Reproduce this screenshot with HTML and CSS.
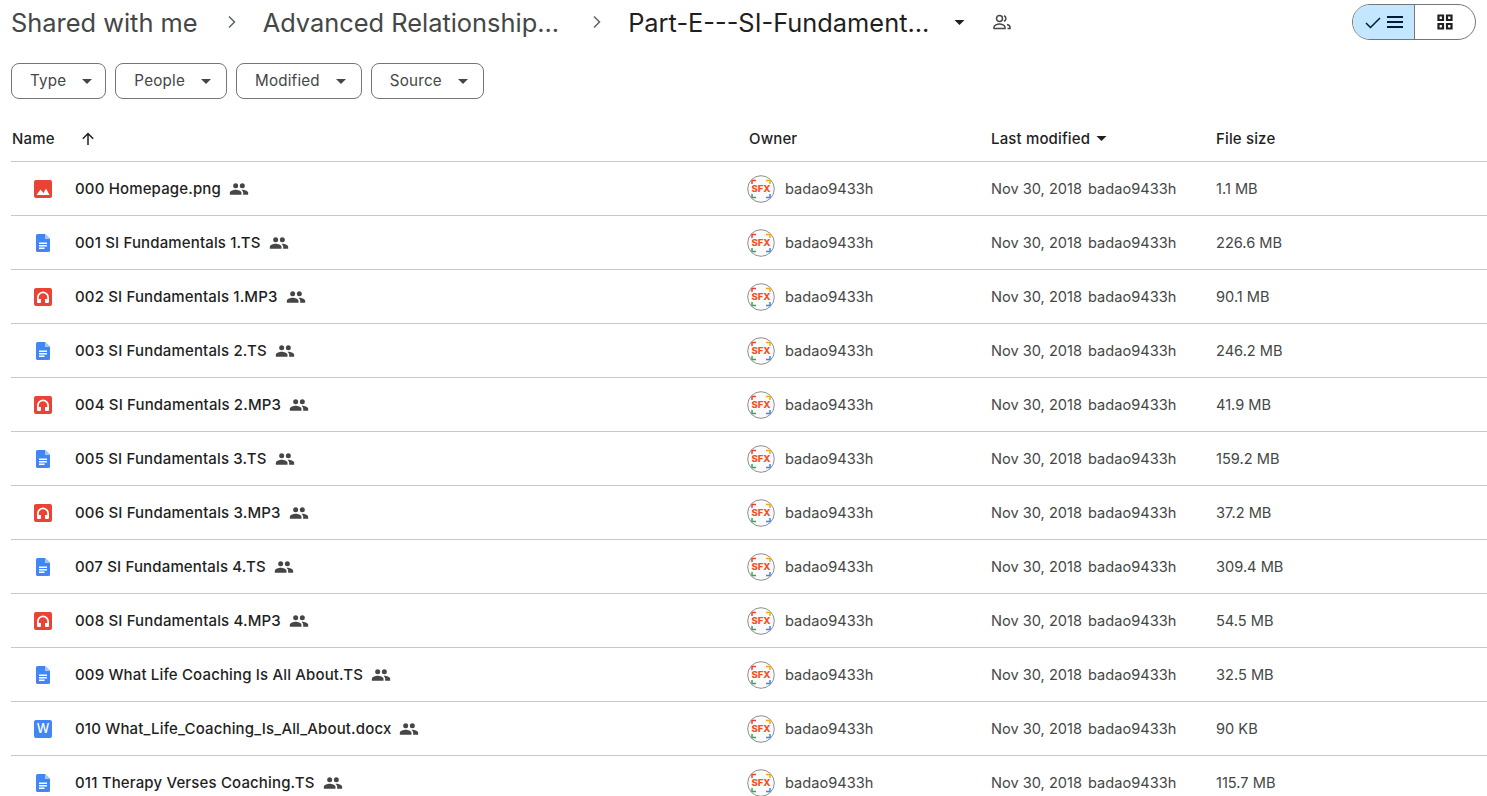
FILE: index.html
```html
<!DOCTYPE html>
<html lang="en">
<head>
<meta charset="utf-8">
<title>Part-E---SI-Fundamentals - Google Drive</title>
<link rel="stylesheet" href="styles.css">
</head>
<body>
<svg class="defs" width="0" height="0" aria-hidden="true">
  <symbol id="people" viewBox="0 0 24 24"><path d="M16 11a3 3 0 1 0 0-6 3 3 0 0 0 0 6zm-8 0a3 3 0 1 0 0-6 3 3 0 0 0 0 6zm0 2c-2.33 0-7 1.17-7 3.5V19h14v-2.5C15 14.17 10.33 13 8 13zm8 0c-.29 0-.62.02-.97.05C16.19 13.89 17 15.02 17 16.5V19h6v-2.500C23 14.17 18.330 13 16 13z"/></symbol>
  <symbol id="image" viewBox="0 0 18 18"><path fill="#ea4335" d="M2 0h14a2 2 0 0 1 2 2v14a2 2 0 0 1-2 2H2a2 2 0 0 1-2-2V2a2 2 0 0 1 2-2z"/><path fill="#fff" d="M2.500 15l4-5.500 3 3.500 2.500-4.500 3.500 6.500z"/></symbol>
  <symbol id="doc" viewBox="0 0 18 18"><path fill="#4285f4" d="M3.500 0H11l5 5v11.500a1.500 1.500 0 0 1-1.500 1.500h-11A1.500 1.500 0 0 1 2 16.500v-15A1.500 1.500 0 0 1 3.500 0z"/><path fill="#a6c5fa" d="M11 0l5 5h-5z"/><path fill="#fff" d="M5 8.500h8V10H5zM5 11h8v1.500H5zM5 13.500h5.500V15H5z"/></symbol>
  <symbol id="audio" viewBox="0 0 18 18"><path fill="#ea4335" d="M2 0h14a2 2 0 0 1 2 2v14a2 2 0 0 1-2 2H2a2 2 0 0 1-2-2V2a2 2 0 0 1 2-2z"/><path fill="#fff" d="M9 3.500a6 6 0 0 0-6 6V14a1 1 0 0 0 1 1h2a1 1 0 0 0 1-1v-3H4.800V9.500a4.200 4.200 0 0 1 8.400 0V11H11v3a1 1 0 0 0 1 1h2a1 1 0 0 0 1-1V9.500a6 6 0 0 0-6-6z"/></symbol>
  <symbol id="word" viewBox="0 0 18 18"><path fill="#4285f4" d="M2 0h14a2 2 0 0 1 2 2v14a2 2 0 0 1-2 2H2a2 2 0 0 1-2-2V2a2 2 0 0 1 2-2z"/></symbol>
  <symbol id="sfx" viewBox="0 0 28 28"><circle cx="14" cy="14" r="13.300" fill="#fbfbfb" stroke="#8f8f8f" stroke-width="1"/><g fill="none" stroke-width="1.500"><path stroke="#ea4335" d="M5 9V5.500h4"/><path stroke="#f9ab00" d="M19 5.500h4V9"/><path stroke="#34a853" d="M5 19v3.500h4"/><path stroke="#4285f4" d="M19 22.500h4V19"/></g></symbol>
  <symbol id="caret" viewBox="0 0 10 5"><path d="M0 0h10L5 5z"/></symbol>
</svg>

<header class="crumbs">
  <span class="crumb">Shared with me</span>
  <svg class="chev" viewBox="0 0 10 14"><path d="M2 1.500 7.500 7 2 12.500" fill="none" stroke="#5f6368" stroke-width="1.500"/></svg>
  <span class="crumb">Advanced Relationship...</span>
  <svg class="chev chev-last" viewBox="0 0 10 14"><path d="M2 1.500 7.500 7 2 12.500" fill="none" stroke="#5f6368" stroke-width="1.500"/></svg>
  <span class="crumb current">Part-E---SI-Fundament...</span>
  <svg class="crumb-caret"><use href="#caret"/></svg>
  <svg class="crumb-people" viewBox="0 0 20 20"><path fill="none" stroke="#444746" stroke-width="1.500" d="M7.500 3.500a3 3 0 1 1 0 6 3 3 0 0 1 0-6zM2 16.500v-1.300c0-1.900 3.300-3.200 5.500-3.200s5.500 1.300 5.500 3.200v1.300zM12 3.700a3 3 0 0 1 0 5.600M15 12.500c1.800.5 3 1.400 3 2.700v1.300h-2.500"/></svg>
  <div class="toggle">
    <div class="toggle-seg on">
      <svg width="17" height="13" viewBox="0 0 17 13"><path d="M1 7l4.500 4.500L15 2" fill="none" stroke="#001d35" stroke-width="1.500"/></svg>
      <svg width="16" height="12" viewBox="0 0 16 12"><path fill="#001d35" d="M0 0h16v2H0zM0 5h16v2H0zM0 10h16v2H0z"/></svg>
    </div>
    <div class="toggle-seg">
      <svg width="16" height="16" viewBox="0 0 16 16"><path fill="none" stroke="#1f1f1f" stroke-width="2.200" d="M1.500 1.500h4.500v4.500H1.500zM10 1.500h4.500v4.500H10zM1.500 10h4.500v4.500H1.500zM10 10h4.500v4.500H10z"/></svg>
    </div>
  </div>
</header>

<nav class="filters">
  <button class="chip">Type<svg class="chip-caret"><use href="#caret"/></svg></button>
  <button class="chip">People<svg class="chip-caret"><use href="#caret"/></svg></button>
  <button class="chip">Modified<svg class="chip-caret"><use href="#caret"/></svg></button>
  <button class="chip">Source<svg class="chip-caret"><use href="#caret"/></svg></button>
</nav>

<section class="table">
  <div class="row head">
    <div class="cell-name"><span class="head-name">Name</span><svg class="arrow" viewBox="0 0 14 14"><path d="M7 13V1.500M1.800 6.700 7 1.500l5.200 5.200" fill="none" stroke="#1f1f1f" stroke-width="1.500"/></svg></div>
    <div>Owner</div>
    <div class="head-mod">Last modified<svg class="head-caret"><use href="#caret"/></svg></div>
    <div>File size</div>
  </div>

  <div class="row"><div class="cell-name"><svg class="ficon"><use href="#image"/></svg><span class="fname">000 Homepage.png</span><svg class="shared"><use href="#people"/></svg></div><div class="owner"><span class="avatar"><svg><use href="#sfx"/></svg><b>SFX</b></span>badao9433h</div><div class="meta"><span>Nov 30, 2018</span><span>badao9433h</span></div><div class="meta">1.1 MB</div></div>
  <div class="row"><div class="cell-name"><svg class="ficon"><use href="#doc"/></svg><span class="fname">001 SI Fundamentals 1.TS</span><svg class="shared"><use href="#people"/></svg></div><div class="owner"><span class="avatar"><svg><use href="#sfx"/></svg><b>SFX</b></span>badao9433h</div><div class="meta"><span>Nov 30, 2018</span><span>badao9433h</span></div><div class="meta">226.6 MB</div></div>
  <div class="row"><div class="cell-name"><svg class="ficon"><use href="#audio"/></svg><span class="fname">002 SI Fundamentals 1.MP3</span><svg class="shared"><use href="#people"/></svg></div><div class="owner"><span class="avatar"><svg><use href="#sfx"/></svg><b>SFX</b></span>badao9433h</div><div class="meta"><span>Nov 30, 2018</span><span>badao9433h</span></div><div class="meta">90.1 MB</div></div>
  <div class="row"><div class="cell-name"><svg class="ficon"><use href="#doc"/></svg><span class="fname">003 SI Fundamentals 2.TS</span><svg class="shared"><use href="#people"/></svg></div><div class="owner"><span class="avatar"><svg><use href="#sfx"/></svg><b>SFX</b></span>badao9433h</div><div class="meta"><span>Nov 30, 2018</span><span>badao9433h</span></div><div class="meta">246.2 MB</div></div>
  <div class="row"><div class="cell-name"><svg class="ficon"><use href="#audio"/></svg><span class="fname">004 SI Fundamentals 2.MP3</span><svg class="shared"><use href="#people"/></svg></div><div class="owner"><span class="avatar"><svg><use href="#sfx"/></svg><b>SFX</b></span>badao9433h</div><div class="meta"><span>Nov 30, 2018</span><span>badao9433h</span></div><div class="meta">41.9 MB</div></div>
  <div class="row"><div class="cell-name"><svg class="ficon"><use href="#doc"/></svg><span class="fname">005 SI Fundamentals 3.TS</span><svg class="shared"><use href="#people"/></svg></div><div class="owner"><span class="avatar"><svg><use href="#sfx"/></svg><b>SFX</b></span>badao9433h</div><div class="meta"><span>Nov 30, 2018</span><span>badao9433h</span></div><div class="meta">159.2 MB</div></div>
  <div class="row"><div class="cell-name"><svg class="ficon"><use href="#audio"/></svg><span class="fname">006 SI Fundamentals 3.MP3</span><svg class="shared"><use href="#people"/></svg></div><div class="owner"><span class="avatar"><svg><use href="#sfx"/></svg><b>SFX</b></span>badao9433h</div><div class="meta"><span>Nov 30, 2018</span><span>badao9433h</span></div><div class="meta">37.2 MB</div></div>
  <div class="row"><div class="cell-name"><svg class="ficon"><use href="#doc"/></svg><span class="fname">007 SI Fundamentals 4.TS</span><svg class="shared"><use href="#people"/></svg></div><div class="owner"><span class="avatar"><svg><use href="#sfx"/></svg><b>SFX</b></span>badao9433h</div><div class="meta"><span>Nov 30, 2018</span><span>badao9433h</span></div><div class="meta">309.4 MB</div></div>
  <div class="row"><div class="cell-name"><svg class="ficon"><use href="#audio"/></svg><span class="fname">008 SI Fundamentals 4.MP3</span><svg class="shared"><use href="#people"/></svg></div><div class="owner"><span class="avatar"><svg><use href="#sfx"/></svg><b>SFX</b></span>badao9433h</div><div class="meta"><span>Nov 30, 2018</span><span>badao9433h</span></div><div class="meta">54.5 MB</div></div>
  <div class="row"><div class="cell-name"><svg class="ficon"><use href="#doc"/></svg><span class="fname">009 What Life Coaching Is All About.TS</span><svg class="shared"><use href="#people"/></svg></div><div class="owner"><span class="avatar"><svg><use href="#sfx"/></svg><b>SFX</b></span>badao9433h</div><div class="meta"><span>Nov 30, 2018</span><span>badao9433h</span></div><div class="meta">32.5 MB</div></div>
  <div class="row"><div class="cell-name"><span class="ficon word"><svg><use href="#word"/></svg><b>W</b></span><span class="fname">010 What_Life_Coaching_Is_All_About.docx</span><svg class="shared"><use href="#people"/></svg></div><div class="owner"><span class="avatar"><svg><use href="#sfx"/></svg><b>SFX</b></span>badao9433h</div><div class="meta"><span>Nov 30, 2018</span><span>badao9433h</span></div><div class="meta">90 KB</div></div>
  <div class="row"><div class="cell-name"><svg class="ficon"><use href="#doc"/></svg><span class="fname">011 Therapy Verses Coaching.TS</span><svg class="shared"><use href="#people"/></svg></div><div class="owner"><span class="avatar"><svg><use href="#sfx"/></svg><b>SFX</b></span>badao9433h</div><div class="meta"><span>Nov 30, 2018</span><span>badao9433h</span></div><div class="meta">115.7 MB</div></div>
</section>
</body>
</html>
```
FILE: styles.css
```css
* { box-sizing: border-box; }
html, body { margin: 0; height: 796px; overflow: hidden; background: #fff; }
body { font-family: Inter, Roboto, sans-serif; color: #1f1f1f; }
.defs { display: block; height: 0; }

.crumbs { display: flex; align-items: center; height: 44px; padding: 0 11px; }
.crumb { font-size: 25.4px; color: #444746; white-space: nowrap; }
.crumb.current { color: #1f1f1f; }
.chev { width: 10px; height: 14px; flex: none; margin: 0 26px 0 29px; }
.chev-last { margin-left: 33px; }
.crumb-caret { width: 11px; height: 5px; flex: none; margin-left: 25px; fill: #1f1f1f; }
.crumb-people { width: 20px; height: 20px; flex: none; margin-left: 27px; }

.toggle { margin-left: auto; display: flex; width: 124px; height: 36px; border: 1px solid #747775; border-radius: 18px; overflow: hidden; }
.toggle-seg { flex: 1; display: flex; align-items: center; justify-content: center; gap: 5px; }
.toggle-seg.on { flex: none; width: 62px; background: #c2e7ff; border-right: 1px solid #747775; }

.filters { display: flex; gap: 9px; padding: 19px 11px 0; }
.chip { display: flex; align-items: center; justify-content: space-between; height: 36px; padding: 0 15px 2px 18px; background: #fff; border: 1px solid #747775; border-radius: 8px; font: 400 15.2px Inter, sans-serif; letter-spacing: 0.2px; color: #444746; gap: 16px; }
.chip:first-child { padding-right: 13px; }
.chip-caret { width: 10px; height: 5px; fill: #444746; flex: none; margin-top: 2px; }

.table { margin: 21px 0 0 11px; }
.row { display: grid; grid-template-columns: 738px 242px 225px 1fr; align-items: center; height: 54px; border-bottom: 1px solid #c7c7c7; font-size: 14.6px; }
.row.head { height: 42px; padding-bottom: 4px; color: #1f1f1f; font-size: 15px; font-weight: 500; letter-spacing: 0.15px; }
.cell-name { display: flex; align-items: center; min-width: 0; }
.head-name { margin-left: 1px; width: 69px; }
.arrow { width: 14px; height: 14px; }
.head-mod { display: flex; align-items: center; }
.head-caret { width: 11px; height: 5px; margin-left: 6px; fill: #1f1f1f; }

.ficon { width: 18px; height: 18px; flex: none; margin-left: 23px; margin-right: 23px; position: relative; display: block; }
.ficon svg { width: 18px; height: 18px; display: block; }
.word b { position: absolute; inset: 0; text-align: center; line-height: 18px; color: #fff; font-size: 12.5px; font-weight: 500; letter-spacing: 0; }
.fname { color: #1f1f1f; white-space: nowrap; font-size: 15px; font-weight: 500; letter-spacing: 0.15px; }
.shared { width: 20px; height: 20px; flex: none; margin-left: 8px; fill: #444746; }

.owner { display: flex; align-items: center; color: #444746; margin-left: -2px; }
.avatar { position: relative; width: 28px; height: 28px; flex: none; margin-right: 10px; display: block; }
.avatar svg { width: 28px; height: 28px; display: block; }
.avatar b { position: absolute; inset: 0; text-align: center; line-height: 28px; font-size: 9.5px; font-weight: 800; color: #f4511e; }

.meta { color: #444746; display: flex; gap: 6px; white-space: nowrap; }
```
